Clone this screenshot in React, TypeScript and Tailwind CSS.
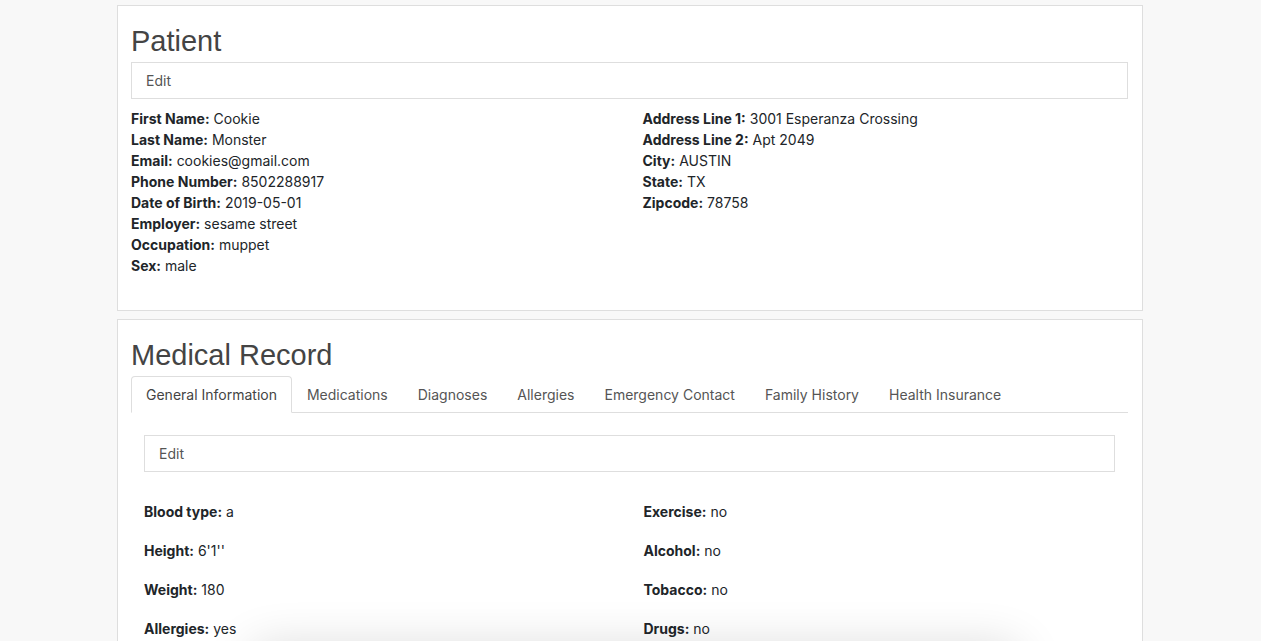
import React from 'react';

const patientLeft: [string, string][] = [
  ['First Name', 'Cookie'],
  ['Last Name', 'Monster'],
  ['Email', 'cookies@gmail.com'],
  ['Phone Number', '8502288917'],
  ['Date of Birth', '2019-05-01'],
  ['Employer', 'sesame street'],
  ['Occupation', 'muppet'],
  ['Sex', 'male'],
];

const patientRight: [string, string][] = [
  ['Address Line 1', '3001 Esperanza Crossing'],
  ['Address Line 2', 'Apt 2049'],
  ['City', 'AUSTIN'],
  ['State', 'TX'],
  ['Zipcode', '78758'],
];

const generalLeft: [string, string][] = [
  ['Blood type', 'a'],
  ['Height', "6'1''"],
  ['Weight', '180'],
  ['Allergies', 'yes'],
];

const generalRight: [string, string][] = [
  ['Exercise', 'no'],
  ['Alcohol', 'no'],
  ['Tobacco', 'no'],
  ['Drugs', 'no'],
];

const tabs = [
  'General Information',
  'Medications',
  'Diagnoses',
  'Allergies',
  'Emergency Contact',
  'Family History',
  'Health Insurance',
];

const Field = ({ label, value }: { label: string; value: string }) => (
  <div className="text-[14px] leading-[21px] text-[#212529]">
    <span className="font-bold">{label}:</span> {value}
  </div>
);

const EditBar = () => (
  <div className="h-[37px] border border-[#dedede] bg-white flex items-center px-[14px] text-[14px] text-[#555]">
    Edit
  </div>
);

const App: React.FC = () => {
  return (
    <div
      className="min-h-[641px] bg-[#f8f8f8] relative overflow-hidden"
      style={{ fontFamily: 'Inter, "Liberation Sans", Arial, sans-serif' }}
    >
      <div className="w-[1026px] ml-[117px] pt-[5px] flex flex-col gap-[8px]">
        {/* Patient card */}
        <div className="bg-white border border-[#dedede] pl-[13px] pr-[14px] pb-[34px]">
          <h1 className="font-['Liberation_Sans',Arial,sans-serif] text-[29px] leading-[34px] text-[#444] mt-[18px] mb-[4px]">Patient</h1>
          <EditBar />
          <div className="grid grid-cols-2 mt-[9px]">
            <div>
              {patientLeft.map(([l, v]) => (
                <Field key={l} label={l} value={v} />
              ))}
            </div>
            <div className="pl-[13px]">
              {patientRight.map(([l, v]) => (
                <Field key={l} label={l} value={v} />
              ))}
            </div>
          </div>
        </div>

        {/* Medical record card */}
        <div className="bg-white border border-[#dedede] pl-[13px] pr-[14px] pb-[40px]">
          <h1 className="font-['Liberation_Sans',Arial,sans-serif] text-[29px] leading-[34px] text-[#444] mt-[18px] mb-[4px]">Medical Record</h1>
          <div className="flex border-b border-[#dedede] h-[37px]">
            {tabs.map((t, i) => (
              <div
                key={t}
                className={
                  i === 0
                    ? 'px-[14px] flex items-center text-[14px] text-[#444] bg-white border border-[#dedede] border-b-white rounded-t-[4px] -mb-px'
                    : 'px-[15px] flex items-center text-[14px] text-[#555]'
                }
              >
                {t}
              </div>
            ))}
          </div>
          <div className="px-[13px] pt-[22px]">
            <EditBar />
            <div className="grid grid-cols-2 mt-[29px]">
              <div className="flex flex-col gap-[18px]">
                {generalLeft.map(([l, v]) => (
                  <Field key={l} label={l} value={v} />
                ))}
              </div>
              <div className="flex flex-col gap-[18px] pl-[14px]">
                {generalRight.map(([l, v]) => (
                  <Field key={l} label={l} value={v} />
                ))}
              </div>
            </div>
          </div>
        </div>
      </div>

      {/* floating element shadow peeking from the bottom */}
      <div className="absolute left-[250px] w-[770px] top-[655px] h-[40px] bg-white rounded-[16px] shadow-[0_-8px_48px_rgba(0,0,0,0.16)]" />
    </div>
  );
};

export default App;
